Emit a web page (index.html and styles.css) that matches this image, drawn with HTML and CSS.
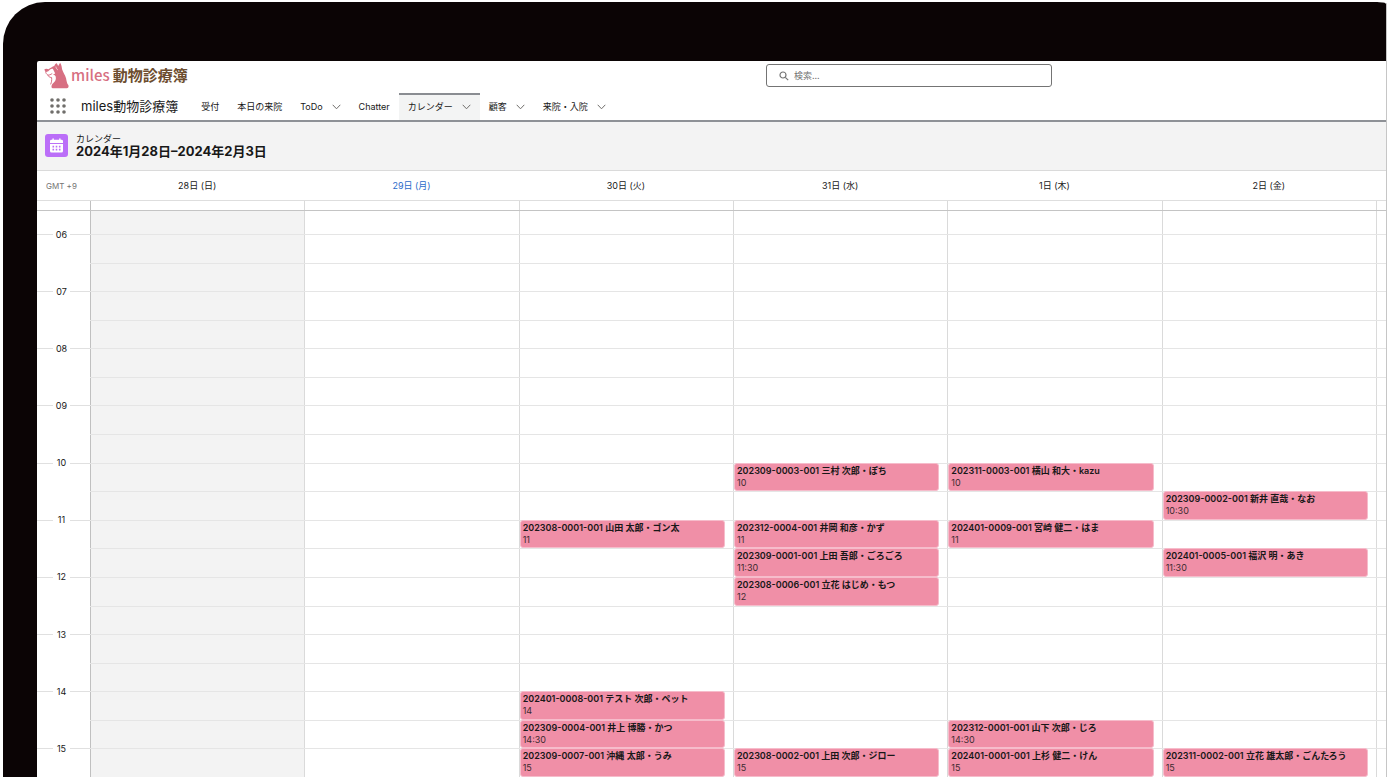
FILE: index.html
```html
<!DOCTYPE html>
<html lang="ja">
<head>
<meta charset="utf-8">
<title>miles動物診療簿 カレンダー</title>
<link rel="stylesheet" href="styles.css">
</head>
<body>
<div class="device">
<div class="screen">
  <header class="topbar">
    <a class="brand" href="#">
      <svg class="brand-mark" viewBox="0 0 76 80" aria-hidden="true">
        <path fill="#d76f82" d="M31 12 C33 7 36 3 39 3 L43 11 L49 1 C53 6 54 14 55 21 C58 31 64 38 67 48 C69 57 70 65 74 69 C76 74 74 79 69 79 L27 79 C22 78 22 73 24 68 C30 61 37 56 36 47 C36 40 32 38 27 37 L34 34 C31 28 29 22 25 18Z"/>
        <path fill="#d76f82" d="M1 22 C4 18 10 19 14 21 C19 17 25 13 32 11 L34 21 L29 18 C22 19 17 23 13 27 L7 29 C4 28 2 26 1 22Z"/>
        <path fill="none" stroke="#d76f82" stroke-width="3" stroke-linejoin="round" d="M5 27 C5 33 8 36 12 39 C14 43 16 46 23 46 C24 54 23 61 20 67 M12 39 C17 39 20 37 25 34"/>
        <path fill="none" stroke="#fff" stroke-width="2" d="M36 13 C37 18 39 21 42 23"/>
      </svg>
      <span class="brand-latin">miles</span><span class="brand-kanji">動物診療簿</span>
    </a>
    <label class="search">
      <svg class="search-icon" viewBox="0 0 10 10" aria-hidden="true"><circle cx="4" cy="4" r="3"/><path d="M6.3 6.3 9.2 9.2"/></svg>
      <input class="search-input" type="search" placeholder="検索..." aria-label="検索">
    </label>
  </header>

  <nav class="navbar">
    <button class="launcher" type="button" aria-label="アプリケーションランチャー">
      <svg class="launcher-icon" viewBox="0 0 16 16" aria-hidden="true">
        <circle cx="2" cy="2" r="1.8"/><circle cx="8" cy="2" r="1.8"/><circle cx="14" cy="2" r="1.8"/>
        <circle cx="2" cy="8" r="1.8"/><circle cx="8" cy="8" r="1.8"/><circle cx="14" cy="8" r="1.8"/>
        <circle cx="2" cy="14" r="1.8"/><circle cx="8" cy="14" r="1.8"/><circle cx="14" cy="14" r="1.8"/>
      </svg>
    </button>
    <span class="app-name">miles動物診療簿</span>
    <a class="tab" href="#">受付</a>
    <a class="tab" href="#">本日の来院</a>
    <a class="tab" href="#">ToDo<svg class="chevron" viewBox="0 0 9 6" aria-hidden="true"><path d="M.7 .8 4.5 4.8 8.3 .8"/></svg></a>
    <a class="tab" href="#">Chatter</a>
    <a class="tab tab-active" href="#" aria-current="page">カレンダー<svg class="chevron" viewBox="0 0 9 6" aria-hidden="true"><path d="M.7 .8 4.5 4.8 8.3 .8"/></svg></a>
    <a class="tab" href="#">顧客<svg class="chevron" viewBox="0 0 9 6" aria-hidden="true"><path d="M.7 .8 4.5 4.8 8.3 .8"/></svg></a>
    <a class="tab" href="#">来院・入院<svg class="chevron" viewBox="0 0 9 6" aria-hidden="true"><path d="M.7 .8 4.5 4.8 8.3 .8"/></svg></a>
  </nav>

  <div class="page-header">
    <svg class="page-icon" viewBox="0 0 23 23" aria-hidden="true">
      <rect width="23" height="23" rx="3" fill="#bb6ef8"/>
      <path fill="#fff" d="M5 9V7.200Q5 5.800 6.400 5.800H7.400V5Q7.400 4.200 8.100 4.200T8.800 5V5.800H14.200V5Q14.200 4.200 14.900 4.200T15.600 5V5.800H16.600Q18 5.800 18 7.200V9Z"/>
      <path fill="#fff" d="M5 10H18V17Q18 18.500 16.500 18.500H6.500Q5 18.500 5 17Z"/>
      <path stroke="#bb6ef8" stroke-width="1.600" stroke-dasharray="1.600 1.600" d="M7.500 12.600H15.500M7.500 15.600H15.500"/>
    </svg>
    <div class="page-titles">
      <span class="page-kind">カレンダー</span>
      <h1 class="page-range">2024年1月28日–2024年2月3日</h1>
    </div>
  </div>

  <div class="days">
    <span class="zone">GMT +9</span>
    <span class="day">28日 (日)</span>
    <a class="day day-today" href="#">29日 (月)</a>
    <span class="day">30日 (火)</span>
    <span class="day">31日 (水)</span>
    <span class="day">1日 (木)</span>
    <span class="day">2日 (金)</span>
  </div>

  <div class="allday">
    <span class="gutter"></span><span class="cell"></span><span class="cell"></span><span class="cell"></span><span class="cell"></span><span class="cell"></span><span class="cell"></span><span class="cell"></span>
  </div>

  <main class="week">
    <span class="column column-off" style="--day:1"></span>
    <span class="column" style="--day:2"></span>
    <span class="column" style="--day:3"></span>
    <span class="column" style="--day:4"></span>
    <span class="column" style="--day:5"></span>
    <span class="column" style="--day:6"></span>
    <span class="column" style="--day:7"></span>

    <span class="line" style="--slot:0"></span><span class="line" style="--slot:1"></span>
    <span class="line" style="--slot:2"></span><span class="line" style="--slot:3"></span>
    <span class="line" style="--slot:4"></span><span class="line" style="--slot:5"></span>
    <span class="line" style="--slot:6"></span><span class="line" style="--slot:7"></span>
    <span class="line" style="--slot:8"></span><span class="line" style="--slot:9"></span>
    <span class="line" style="--slot:10"></span><span class="line" style="--slot:11"></span>
    <span class="line" style="--slot:12"></span><span class="line" style="--slot:13"></span>
    <span class="line" style="--slot:14"></span><span class="line" style="--slot:15"></span>
    <span class="line" style="--slot:16"></span><span class="line" style="--slot:17"></span>
    <span class="line" style="--slot:18"></span>

    <span class="hour" style="--slot:0"><span class="hour-text">06</span></span>
    <span class="hour" style="--slot:2"><span class="hour-text">07</span></span>
    <span class="hour" style="--slot:4"><span class="hour-text">08</span></span>
    <span class="hour" style="--slot:6"><span class="hour-text">09</span></span>
    <span class="hour" style="--slot:8"><span class="hour-text">10</span></span>
    <span class="hour" style="--slot:10"><span class="hour-text">11</span></span>
    <span class="hour" style="--slot:12"><span class="hour-text">12</span></span>
    <span class="hour" style="--slot:14"><span class="hour-text">13</span></span>
    <span class="hour" style="--slot:16"><span class="hour-text">14</span></span>
    <span class="hour" style="--slot:18"><span class="hour-text">15</span></span>

    <a class="event" href="#" style="--day:3;--slot:10"><b class="event-title">202308-0001-001 山田 太郎・ゴン太</b><span class="event-time">11</span></a>
    <a class="event" href="#" style="--day:3;--slot:16"><b class="event-title">202401-0008-001 テスト 次郎・ペット</b><span class="event-time">14</span></a>
    <a class="event" href="#" style="--day:3;--slot:17"><b class="event-title">202309-0004-001 井上 博勝・かつ</b><span class="event-time">14:30</span></a>
    <a class="event" href="#" style="--day:3;--slot:18"><b class="event-title">202309-0007-001 沖縄 太郎・うみ</b><span class="event-time">15</span></a>

    <a class="event" href="#" style="--day:4;--slot:8"><b class="event-title">202309-0003-001 三村 次郎・ぽち</b><span class="event-time">10</span></a>
    <a class="event" href="#" style="--day:4;--slot:10"><b class="event-title">202312-0004-001 井岡 和彦・かず</b><span class="event-time">11</span></a>
    <a class="event" href="#" style="--day:4;--slot:11"><b class="event-title">202309-0001-001 上田 吾郎・ごろごろ</b><span class="event-time">11:30</span></a>
    <a class="event" href="#" style="--day:4;--slot:12"><b class="event-title">202308-0006-001 立花 はじめ・もつ</b><span class="event-time">12</span></a>
    <a class="event" href="#" style="--day:4;--slot:18"><b class="event-title">202308-0002-001 上田 次郎・ジロー</b><span class="event-time">15</span></a>

    <a class="event" href="#" style="--day:5;--slot:8"><b class="event-title">202311-0003-001 横山 和大・kazu</b><span class="event-time">10</span></a>
    <a class="event" href="#" style="--day:5;--slot:10"><b class="event-title">202401-0009-001 宮崎 健二・はま</b><span class="event-time">11</span></a>
    <a class="event" href="#" style="--day:5;--slot:17"><b class="event-title">202312-0001-001 山下 次郎・じろ</b><span class="event-time">14:30</span></a>
    <a class="event" href="#" style="--day:5;--slot:18"><b class="event-title">202401-0001-001 上杉 健二・けん</b><span class="event-time">15</span></a>

    <a class="event" href="#" style="--day:6;--slot:9"><b class="event-title">202309-0002-001 新井 直哉・なお</b><span class="event-time">10:30</span></a>
    <a class="event" href="#" style="--day:6;--slot:11"><b class="event-title">202401-0005-001 福沢 明・あき</b><span class="event-time">11:30</span></a>
    <a class="event" href="#" style="--day:6;--slot:18"><b class="event-title">202311-0002-001 立花 雄太郎・ごんたろう</b><span class="event-time">15</span></a>
  </main>
</div>
</div>
</body>
</html>
```

FILE: styles.css
```css
*, *::before, *::after { box-sizing: border-box; }

body {
  margin: 0;
  background: #fff;
  color: #181818;
  font-family: Inter, "Noto Sans CJK JP", sans-serif;
  font-size: 9px;
  line-height: 12px;
  min-height: 100vh;
  display: flex;
  padding: 2px 0 1px 3px;
}

a { color: inherit; text-decoration: none; }

/* Tablet bezel */
.device {
  flex: 1;
  display: flex;
  min-width: 0;
  padding: 59px 0 0 34px;
  background: #0b0405;
  border-right: 1px solid #c6c6c6;
  border-radius: 42px 10px 0 0 / 42px 2px 0 0;
}

.screen {
  flex: 1;
  min-width: 0;
  display: flex;
  flex-direction: column;
  background: #fff;
  border-top-left-radius: 2px;
}

/* Top bar */
.topbar {
  display: grid;
  grid-template-columns: 24fr 286px 11fr;
  align-items: start;
  height: 32px;
}

.brand {
  display: flex;
  align-items: center;
  padding-left: 7px;
  height: 28px;
  font-family: "Noto Sans CJK JP", sans-serif;
  font-size: 15px;
  font-weight: 500;
}

.brand-mark { width: 25px; height: 27px; margin-right: 2px; }
.brand-latin { color: #d76f82; margin-right: 3px; }
.brand-kanji { color: #6d4d2f; font-weight: 700; }

.search {
  display: flex;
  align-items: center;
  gap: 5px;
  height: 23px;
  margin-top: 3px;
  padding: 0 12px;
  border: 1px solid #747474;
  border-radius: 3px;
}

.search-icon {
  width: 10px;
  height: 10px;
  fill: none;
  stroke: #747474;
  stroke-width: 1.2;
}

.search-input {
  flex: 1;
  min-width: 0;
  padding: 0;
  border: 0;
  outline: 0;
  background: none;
  font: inherit;
}

.search-input::placeholder { color: #747474; opacity: 1; }

/* Navigation */
.navbar {
  display: flex;
  height: 29px;
  border-bottom: 2px solid #8e9196;
}

.launcher {
  display: flex;
  align-items: center;
  padding: 0 15px 2px 13px;
  border: 0;
  background: none;
}

.launcher-icon { width: 16px; height: 16px; fill: #706e6b; }

.app-name {
  align-self: center;
  margin-right: 14px;
  padding-bottom: 1px;
  font-size: 13px;
  line-height: 20px;
}

.tab {
  display: flex;
  align-items: center;
  gap: 9px;
  padding: 0 9px 2px;
  border-top: 2px solid transparent;
}

.tab-active { border-top-color: #8a8d92; background: #f3f4f4; }

.chevron {
  width: 9px;
  height: 6px;
  fill: none;
  stroke: #706e6b;
}

/* Page header */
.page-header {
  display: flex;
  align-items: center;
  gap: 8px;
  height: 49px;
  padding: 0 8px;
  background: #f3f3f3;
  border-bottom: 1px solid #dadada;
}

.page-icon { width: 23px; height: 23px; margin-bottom: 2px; }
.page-titles { display: flex; flex-direction: column; }
.page-kind { line-height: 11px; }
.page-range { margin: 0; font-size: 13px; font-weight: 700; line-height: 15px; }

/* Calendar */
.days, .allday, .week {
  display: grid;
  grid-template-columns: 53px repeat(6, 1fr) 10px;
}

.days {
  height: 30px;
  align-items: center;
  padding-top: 1px;
  border-bottom: 1px solid #dedede;
}

.zone { padding-left: 9px; font-size: 8px; color: #747474; }
.day { text-align: center; }
.day-today { color: #2a6bc9; }

.allday { height: 10px; border-bottom: 1px solid #c4c4c4; }
.cell { border-left: 1px solid #dadada; }
.gutter + .cell { border-left-color: #c0c0c0; }

.week {
  flex: 1;
  grid-template-rows: 23px repeat(19, minmax(28px, 1fr));
}

.column {
  grid-row: 1 / -1;
  grid-column: calc(var(--day) + 1);
  border-left: 1px solid #dadada;
}

.column-off { background: #f3f3f3; border-left-color: #c0c0c0; }

.line {
  grid-row: calc(var(--slot) + 2);
  grid-column: 2 / -1;
  height: 1px;
  background: #e5e5e5;
}

.hour {
  grid-row: calc(var(--slot) + 2);
  grid-column: 1;
  display: flex;
  align-items: center;
  height: 1px;
}

.hour::before, .hour::after {
  content: "";
  height: 1px;
  background: #e0e0e0;
}

.hour::before { width: 16px; }
.hour::after { flex: 1; }
.hour-text { width: 17px; text-align: center; }

.event {
  grid-row: calc(var(--slot) + 2);
  grid-column: calc(var(--day) + 1);
  display: flex;
  flex-direction: column;
  min-width: 0;
  margin: 0 8px 0 1px;
  padding: 1px 2px 0;
  background: #f08fa7;
  border: 1px solid #f6bccb;
  border-radius: 3px;
  overflow: hidden;
  white-space: nowrap;
}

.event-title { font-weight: 600; }
.event-time { color: #3d2a2f; }
```
